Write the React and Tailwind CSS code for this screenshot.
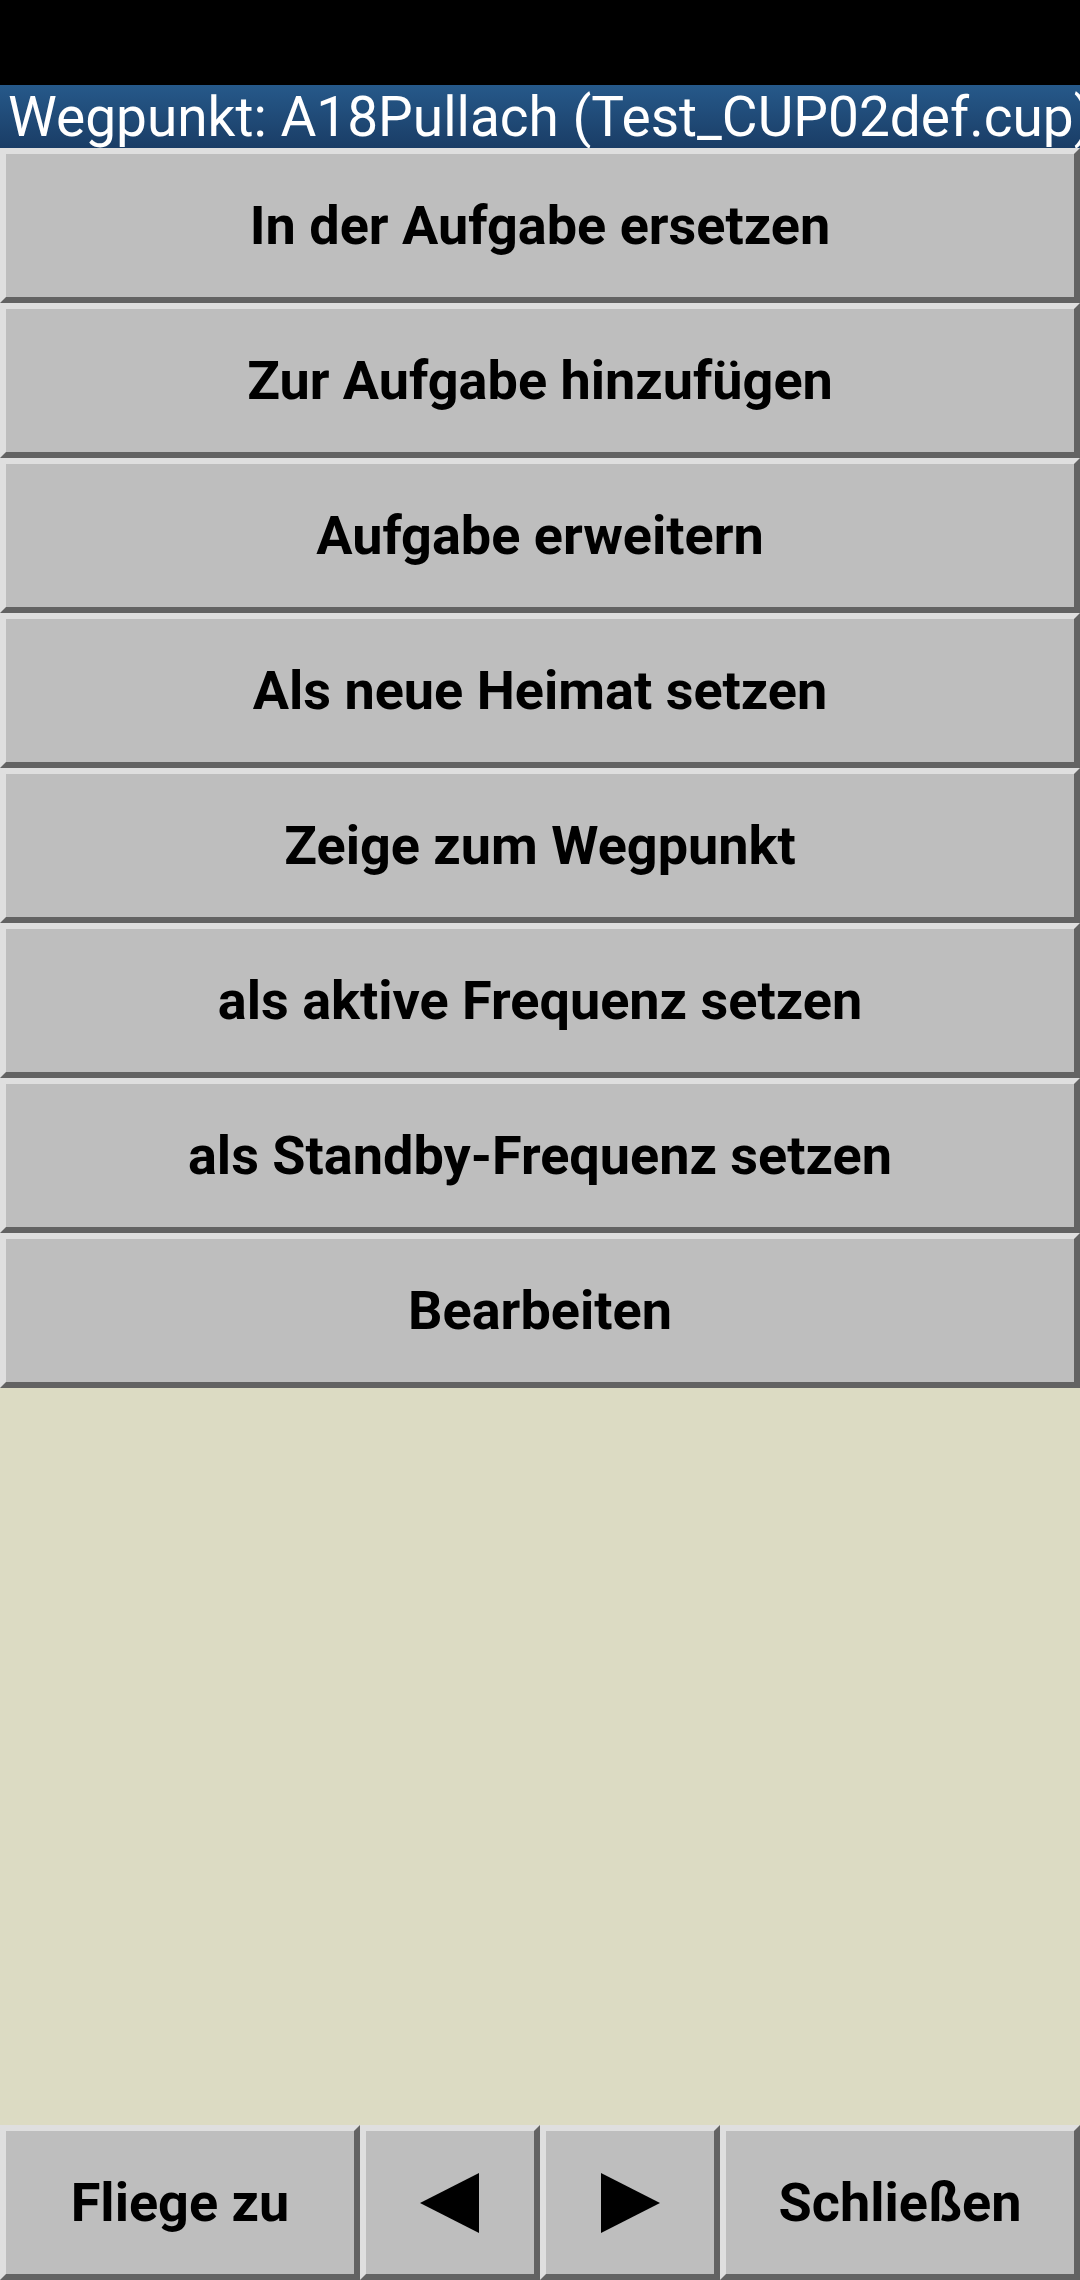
import React from "react";

const items = [
  "In der Aufgabe ersetzen",
  "Zur Aufgabe hinzufügen",
  "Aufgabe erweitern",
  "Als neue Heimat setzen",
  "Zeige zum Wegpunkt",
  "als aktive Frequenz setzen",
  "als Standby-Frequenz setzen",
  "Bearbeiten",
];

const Bevel = ({ className = "", children }) => (
  <div
    className={`flex items-center justify-center bg-[#bebebe] border-[6px] border-t-[#dfdfdf] border-l-[#dfdfdf] border-b-[#636363] border-r-[#636363] text-black font-bold text-[54px] ${className}`}
  >
    {children}
  </div>
);

export default function App() {
  return (
    <div
      className="w-[1080px] h-[2280px] flex flex-col bg-[#dcdbc3] overflow-hidden"
      style={{ fontFamily: "Roboto, 'Liberation Sans', sans-serif" }}
    >
      {/* Status bar */}
      <div className="h-[85px] bg-black shrink-0"></div>

      {/* Title */}
      <div className="h-[63px] shrink-0 bg-gradient-to-b from-[#26598a] to-[#1a3d66] text-white text-[55px] leading-[64px] pl-2 whitespace-nowrap overflow-hidden">
        Wegpunkt: A18Pullach (Test_CUP02def.cup)
      </div>

      {/* Menu buttons */}
      <div className="flex flex-col shrink-0">
        {items.map((label) => (
          <Bevel key={label} className="h-[155px]">
            {label}
          </Bevel>
        ))}
      </div>

      <div className="flex-1"></div>

      {/* Bottom bar */}
      <div className="grid grid-cols-6 h-[155px] shrink-0">
        <Bevel className="col-span-2">Fliege zu</Bevel>
        <Bevel>
          <svg width="60" height="60" viewBox="0 0 60 60">
            <polygon points="0,30 59,0 59,60" fill="#000" />
          </svg>
        </Bevel>
        <Bevel>
          <svg width="60" height="60" viewBox="0 0 60 60">
            <polygon points="1,0 60,30 1,60" fill="#000" />
          </svg>
        </Bevel>
        <Bevel className="col-span-2">Schließen</Bevel>
      </div>
    </div>
  );
}
